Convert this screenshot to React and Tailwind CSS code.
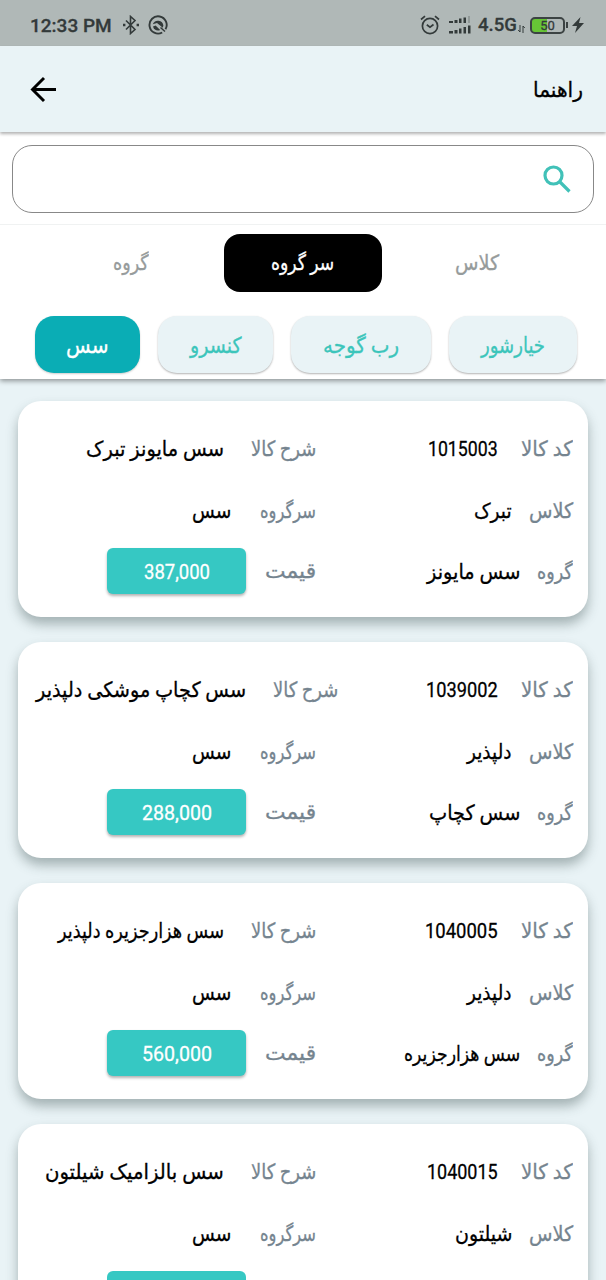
import { useLayoutEffect, useRef } from 'react';

const products = [
  {
    code: ['1015003', 70],
    title: ['سس مایونز تبرک', 138],
    brand: ['تبرک', 38],
    group: ['سس مایونز', 93],
    price: ['387,000', 66],
  },
  {
    code: ['1039002', 72],
    title: ['سس کچاپ موشکی دلپذیر', 210],
    brand: ['دلپذیر', 45],
    group: ['سس کچاپ', 91],
    price: ['288,000', 70],
  },
  {
    code: ['1040005', 73],
    title: ['سس هزارجزیره دلپذیر', 166],
    brand: ['دلپذیر', 45],
    group: ['سس هزارجزیره', 116],
    price: ['560,000', 70],
  },
  {
    code: ['1040015', 71],
    title: ['سس بالزامیک شیلتون', 179],
    brand: ['شیلتون', 58],
  },
];

// One line of text condensed or stretched to a fixed width
function FitText({ width, className = '', children }) {
  const box = useRef(null);
  const inner = useRef(null);

  useLayoutEffect(() => {
    const natural = inner.current.offsetWidth;
    box.current.style.width = `${width}px`;
    inner.current.style.transform = `scaleX(${width / natural})`;
  }, [width, children]);

  return (
    <span ref={box} className={`flex shrink-0 justify-start whitespace-nowrap ${className}`}>
      <span ref={inner} className="inline-block shrink-0 origin-right">{children}</span>
    </span>
  );
}

function StatusBar() {
  return (
    <div dir="ltr" className="flex h-[46px] shrink-0 items-center bg-[#b0b8b7] pr-[22px] pl-[30px] pt-1 font-['Roboto',sans-serif] text-[#333a3a]">
      <span className="w-[84px] text-[19px] font-medium whitespace-nowrap">12:33 PM</span>
      <svg className="ml-2 h-5 w-[18px]" viewBox="0 0 18 20" fill="none" stroke="currentColor" strokeWidth="1.6">
        <path d="M4 5.5l9 9-4.5 4V1.5l4.5 4-9 9" />
        <path d="M1 10h2.4M14.6 10H17" strokeWidth="2.4" />
      </svg>
      <svg className="ml-2 h-5 w-5" viewBox="0 0 20 20" fill="none" stroke="currentColor" strokeWidth="1.9">
        <path d="M14.2 17.500A8.600 8.600 0 1 1 17.500 14.300" />
        <path d="M4.800 9.200a5.500 5.500 0 0 1 10.600 1.300l-.6 2.300-5.800-4.900z" fill="currentColor" stroke="none" />
        <path d="M5 11.500l2.600-1 4.600 4.400c-3 1.500-6.200 0-7.200-3.400z" fill="currentColor" stroke="none" />
        <path d="M12.500 12.500l4.500 4" strokeWidth="1.500" />
      </svg>
      <div className="ml-auto flex items-center">
        <svg className="h-5 w-5" viewBox="0 0 20 20" fill="none" stroke="currentColor" strokeWidth="1.7">
          <circle cx="10" cy="11" r="7.6" />
          <path d="M6.8 9.8l3.2 2.400 3.500-2.700M1 4.500L5 1.200M19 4.500l-4-3.300" />
        </svg>
        <svg className="ml-2 h-[18px] w-6" viewBox="0 0 24 18" fill="currentColor">
          <path d="M1 5h4v2H1zM6.500 4h3v3h-3zM11 2.500h2.500V7H11zM15.500 1.500H18V7h-2.500zM1 15h4v2.500H1zM6.500 14h3v3.500h-3zM11 12.500h2.500v5H11zM15.500 11H18v6.500h-2.500zM20 9.500h2.500v8H20z" />
          <path d="M20 0h2v7h-2z" opacity=".25" />
        </svg>
        <span className="ml-1.5 w-[38px] text-[18.500px] font-medium whitespace-nowrap [-webkit-text-stroke:0.3px]">4.5G</span>
        <svg className="mt-2 ml-0.5 h-2 w-[7px]" viewBox="0 0 7 8" fill="none" stroke="currentColor" strokeWidth="1">
          <path d="M2 0v7L.2 5M5 8V1l1.800 2" />
        </svg>
        <div className="ml-[5px] flex h-[17px] w-[35px] items-center justify-center rounded-[5px] border-2 border-[#3c4343] bg-[linear-gradient(90deg,#67c536_50%,transparent_50%)] text-[13px]">
          50
        </div>
        <div className="ml-px h-1.5 w-0.5 bg-[#3c4343]" />
        <svg className="ml-1 h-4 w-3" viewBox="0 0 12 16" fill="currentColor">
          <path d="M8.500 0L0 9h5l-2 7 9-10H7z" />
        </svg>
      </div>
    </div>
  );
}

function Field({ label, labelWidth, gap, children }) {
  return (
    <div className={`flex items-center ${gap}`}>
      <FitText width={labelWidth} className="text-[#75848f]">{label}</FitText>
      {children}
    </div>
  );
}

function ProductCard({ item }) {
  const wide = item.title[1] > 200;

  return (
    <div className="h-[216px] shrink-0 rounded-[23px] bg-white pt-[18px] pr-[15px] shadow-[0_7px_12px_rgba(50,70,70,0.38)]">
      <div className="flex h-[61.7px] items-center">
        <div className={wide ? 'w-[235px] shrink-0' : 'w-[257px] shrink-0'}>
          <Field label="کد کالا" labelWidth={52} gap="gap-[23px]">
            <FitText width={item.code[1]}>{item.code[0]}</FitText>
          </Field>
        </div>
        <Field label="شرح کالا" labelWidth={65} gap="gap-[27px]">
          <FitText width={item.title[1]}>{item.title[0]}</FitText>
        </Field>
      </div>
      <div className="flex h-[61.7px] items-center">
        <div className="w-[257px] shrink-0">
          <Field label="کلاس" labelWidth={44} gap="gap-[17px]">
            <FitText width={item.brand[1]}>{item.brand[0]}</FitText>
          </Field>
        </div>
        <Field label="سرگروه" labelWidth={56} gap="gap-[29px]">
          <FitText width={39}>سس</FitText>
        </Field>
      </div>
      {item.price ? (
        <div className="flex h-[58px] items-center">
          <div className="w-[257px] shrink-0 pt-0.5">
            <Field label="گروه" labelWidth={36} gap="gap-[17px]">
              <FitText width={item.group[1]}>{item.group[0]}</FitText>
            </Field>
          </div>
          <Field label="قیمت" labelWidth={51} gap="gap-[19px]">
            <div className="flex h-[46px] w-[139px] items-center justify-center rounded-md bg-[#36c8c3] pt-0.5 text-white shadow-[0_2px_3px_rgba(0,0,0,0.3)]">
              <FitText width={item.price[1]}>{item.price[0]}</FitText>
            </div>
          </Field>
        </div>
      ) : (
        <div className="mt-[5.6px] mr-[327px] h-[46px] w-[139px] rounded-md bg-[#36c8c3]" />
      )}
    </div>
  );
}

export default function App() {
  return (
    <div dir="rtl" className="flex h-[1280px] w-[606px] flex-col overflow-hidden bg-[#e9f3f6] font-['Roboto','DejaVu_Sans',sans-serif] text-[21px] leading-none text-black [-webkit-text-stroke:0.3px]">
      <StatusBar />

      <header className="relative z-20 flex h-[86px] shrink-0 items-center justify-between bg-[#e9f3f6] pr-[23px] pl-[30px] shadow-[0_2px_3px_rgba(0,0,0,0.3)]">
        <FitText width={50} className="pt-[3px]">راهنما</FitText>
        <svg className="h-[26px] w-[26px]" viewBox="0 0 26 26" fill="none" stroke="currentColor" strokeWidth="2.9">
          <path d="M26 13.5H3M14 2L2.500 13.500 14 25" />
        </svg>
      </header>

      <section className="relative z-10 h-[247px] shrink-0 bg-white shadow-[0_2px_5px_rgba(0,0,0,0.4)]">
        <div className="h-[93px] border-b border-[#f0f2f2] px-3 pt-[13px]">
          <div className="flex h-[68px] items-center rounded-[20px] border border-[#888] pr-[22px]">
            <svg className="h-7 w-7" viewBox="0 0 28 28" fill="none" stroke="#41c1b8" strokeWidth="3.2">
              <circle cx="10.5" cy="10.5" r="8.500" />
              <path d="M17 17l9.500 9.500" />
            </svg>
          </div>
        </div>

        <div className="mt-[9px] flex h-[58px] items-center text-[#969b9b]">
          <div className="flex w-56 justify-center pr-[34px]">
            <FitText width={44}>کلاس</FitText>
          </div>
          <div className="flex h-full w-[158px] items-center justify-center rounded-[16px] bg-black text-white">
            <FitText width={63}>سر گروه</FitText>
          </div>
          <div className="flex w-56 justify-center pl-[38px]">
            <FitText width={36}>گروه</FitText>
          </div>
        </div>

        <div className="mt-6 flex h-[57px] gap-[18px] pr-[29px] text-[22px] text-[#3cc5bb]">
          <div className="flex w-[128px] items-center justify-center rounded-[19px] bg-[#e9f3f6] pt-0.5 shadow-[0_1px_2px_rgba(0,0,0,0.3)]">
            <FitText width={64}>خیارشور</FitText>
          </div>
          <div className="flex w-[140px] items-center justify-center rounded-[19px] bg-[#e9f3f6] pt-0.5 shadow-[0_1px_2px_rgba(0,0,0,0.3)]">
            <FitText width={76}>رب گوجه</FitText>
          </div>
          <div className="flex w-[115px] items-center justify-center rounded-[19px] bg-[#e9f3f6] pt-0.5 shadow-[0_1px_2px_rgba(0,0,0,0.3)]">
            <FitText width={52}>کنسرو</FitText>
          </div>
          <div className="flex w-[105px] items-center justify-center rounded-[19px] bg-[#0aadb5] pt-0.5 text-white shadow-[0_1px_2px_rgba(0,0,0,0.2)]">
            <FitText width={42}>سس</FitText>
          </div>
        </div>
      </section>

      <main className="flex flex-1 flex-col gap-[25px] overflow-hidden px-[18px] pt-[22px]">
        {products.map((item) => (
          <ProductCard key={item.code[0]} item={item} />
        ))}
      </main>
    </div>
  );
}
